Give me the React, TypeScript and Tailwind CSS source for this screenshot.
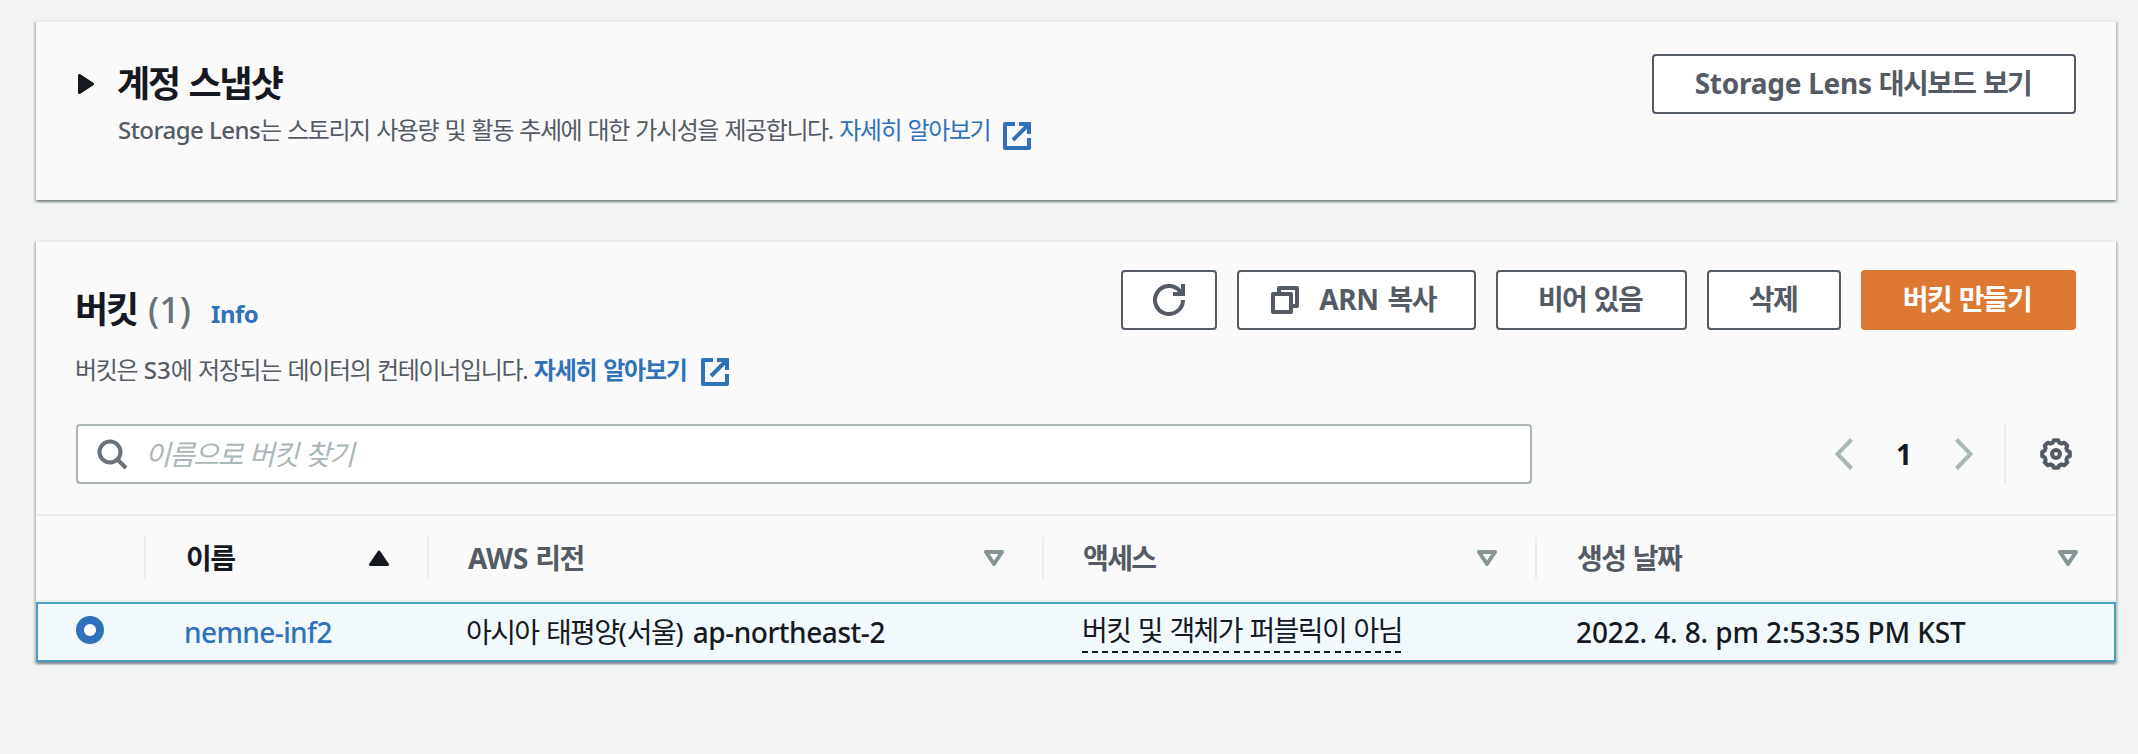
import type { ReactNode } from "react";

const panel =
  "border-t-2 border-[#eaeded] bg-[#fafafa] shadow-[0_2px_2px_rgba(0,28,36,0.3),2px_2px_2px_rgba(0,28,36,0.15),-2px_2px_2px_rgba(0,28,36,0.15)]";

// Korean text is set a little tighter than the font's default, with wider word gaps.
const ko24 = "tracking-[-1.4px] [word-spacing:1.5px]";
const ko28 = "tracking-[-1.6px] [word-spacing:1.8px]";
const ko36 = "tracking-[-2.1px] [word-spacing:2.3px]";

function ExternalIcon() {
  return (
    <svg className="h-7 w-7 shrink-0" viewBox="0 0 28 28" fill="none" stroke="#2f72b9" strokeWidth="4">
      <path d="M12 2H2V26H26V16" strokeLinejoin="round" />
      <path d="M16 2H26V12" />
      <path d="M10 18L25 3" />
    </svg>
  );
}

function RefreshIcon() {
  return (
    <svg className="h-8 w-8" viewBox="0 0 32 32" fill="none" stroke="#545b64" strokeWidth="4">
      <path d="M30 16A14 14 0 1 1 27 7.3L29 10" />
      <path d="M30 0V10H20" />
    </svg>
  );
}

function CopyIcon() {
  return (
    <svg className="h-7 w-7" viewBox="0 0 28 28" fill="none" stroke="#545b64" strokeWidth="4" strokeLinejoin="round">
      <rect x="2" y="8" width="18" height="18" />
      <path d="M8 7V2H26V20H21" />
    </svg>
  );
}

function SearchIcon() {
  return (
    <svg className="h-8 w-8 shrink-0" viewBox="0 0 32 32" fill="none" stroke="#687078" strokeWidth="4">
      <circle cx="14" cy="14" r="10.5" />
      <path d="M21.5 21.5L30 30" />
    </svg>
  );
}

const gearPoints = Array.from({ length: 8 }, (_, k) =>
  [
    [-9, 14],
    [9, 14],
    [16, 11.8],
    [29, 11.8],
  ].map(([offset, radius]) => {
    const a = ((k * 45 + offset) * Math.PI) / 180;
    return `${(16 + radius * Math.cos(a)).toFixed(2)},${(16 + radius * Math.sin(a)).toFixed(2)}`;
  }),
)
  .flat()
  .join(" ");

function GearIcon() {
  return (
    <svg className="h-8 w-8" viewBox="0 0 32 32" fill="none" stroke="#545b64" strokeWidth="4">
      <polygon points={gearPoints} strokeLinejoin="round" />
      <circle cx="16" cy="16" r="4" />
    </svg>
  );
}

function Chevron({ right = false }: { right?: boolean }) {
  return (
    <svg className="h-8 w-[18px]" viewBox="0 0 18 32" fill="none" stroke="#aab7b8" strokeWidth="4">
      <path d={right ? "M1.5 1.5L15.5 16L1.5 30.5" : "M16.5 1.5L2.5 16L16.5 30.5"} />
    </svg>
  );
}

function SortDown() {
  return (
    <svg className="h-4 w-5" viewBox="0 0 20 16" fill="none" stroke="#879596" strokeWidth="4" strokeLinejoin="round">
      <path d="M2 2H18L10 14Z" />
    </svg>
  );
}

function SortUp() {
  return (
    <svg className="h-4 w-5" viewBox="0 0 20 16" fill="#16191f" stroke="#16191f" strokeWidth="3" strokeLinejoin="round">
      <path d="M1.5 14.5H18.5L10 2Z" />
    </svg>
  );
}

function Button({ children, className }: { children: ReactNode; className: string }) {
  return (
    <button
      className={
        "flex h-[60px] items-center justify-center rounded-[4px] border-2 pb-[3px] text-[28px] font-bold leading-[44px] " +
        ko28 +
        " " +
        className
      }
    >
      {children}
    </button>
  );
}

const plain = "border-[#545b64] bg-white text-[#545b64]";

function HeaderCell({ children, icon, last = false }: { children: ReactNode; icon: ReactNode; last?: boolean }) {
  return (
    <div
      className={
        "flex h-[42px] items-center justify-between border-[#eaeded] pl-[39px] pr-[38px] " + (last ? "" : "border-r-2")
      }
    >
      <span className="pb-px leading-[44px]">{children}</span>
      {icon}
    </div>
  );
}

const columns = "grid grid-cols-[110px_283px_615px_493px_579px]";

export default function App() {
  return (
    <div className='h-[754px] w-[2138px] overflow-hidden whitespace-nowrap bg-[#f2f3f3] pl-9 pr-[22px] pt-5 font-["Noto_Sans","Noto_Sans_CJK_KR",sans-serif] text-[28px] text-[#16191f]'>
      <section className={"flex h-[180px] items-start justify-between px-10 pt-8 " + panel}>
        <div className="flex pt-2">
          <svg className="ml-0.5 mt-3 h-5 w-4" viewBox="0 0 16 20" fill="#16191f" stroke="#16191f" strokeWidth="3" strokeLinejoin="round">
            <path d="M1.5 1.5V18.5L14.5 10Z" />
          </svg>
          <div className="pl-[23px]">
            <h2 className={"text-[36px] font-bold leading-[44px] " + ko36}>계정 스냅샷</h2>
            <div className="ml-px mt-0.5 flex items-center text-[24px] leading-[44px] text-[#545b64]">
              <p className={ko24}>
                <span className="font-medium tracking-[-0.55px] [word-spacing:0px]">Storage Lens</span>는 스토리지 사용량 및 활동 추세에 대한
                가시성을 제공합니다. <a className="text-[#2f72b9]">자세히 알아보기</a>
              </p>
              <span className="ml-[13px] mt-3">
                <ExternalIcon />
              </span>
            </div>
          </div>
        </div>
        <Button className={plain + " w-[424px] pr-0.5"}>
          <span className="tracking-[-0.25px] [word-spacing:0px]">Storage Lens&nbsp;</span>대시보드 보기
        </Button>
      </section>

      <section className={"mt-10 h-[422px] " + panel}>
        <div className="flex h-[182px] items-start justify-between px-10 pt-7">
          <div className="pt-[18px]">
            <div className="-ml-px flex items-baseline leading-[44px]">
              <h2 className={"text-[36px] font-bold " + ko36}>버킷</h2>
              <span className="ml-[11px] text-[36px] font-medium text-[#687078]">(1)</span>
              <a className="ml-5 text-[24px] font-bold tracking-[-0.5px] text-[#2f72b9]">Info</a>
            </div>
            <div className="-ml-px mt-3 flex items-center text-[24px] leading-[44px] text-[#545b64]">
              <p className="tracking-[-1.33px] [word-spacing:1.6px]">
                버킷은 <span className="font-medium tracking-normal">S3</span>에 저장되는 데이터의 컨테이너입니다.{" "}
                <a className="font-bold tracking-[-1.2px] text-[#2f72b9]">자세히 알아보기</a>
              </p>
              <span className="ml-3.5 mt-1">
                <ExternalIcon />
              </span>
            </div>
          </div>
          <div className="flex">
            <Button className={plain + " w-24"}>
              <span className="pt-[3px]">
                <RefreshIcon />
              </span>
            </Button>
            <Button className={plain + " ml-5 w-[239px] pr-1.5"}>
              <span className="mr-5 pt-[3px]">
                <CopyIcon />
              </span>
              <span>
                <span className="tracking-[-0.3px]">ARN </span>복사
              </span>
            </Button>
            <Button className={plain + " ml-5 w-[191px] pr-[3px]"}>비어 있음</Button>
            <Button className={plain + " ml-5 w-[134px] pr-0.5"}>삭제</Button>
            <Button className="ml-5 w-[215px] border-[#dd7832] bg-[#dd7832] pr-[3px] text-white">버킷 만들기</Button>
          </div>
        </div>

        <div className="flex h-[90px] items-start justify-between px-10">
          <label className="flex h-[60px] w-[1456px] items-center rounded-[4px] border-2 border-[#aab7b8] bg-white pl-[18px]">
            <SearchIcon />
            <input
              placeholder="이름으로 버킷 찾기"
              className={
                "ml-[17px] h-[44px] flex-1 bg-transparent outline-none placeholder:italic placeholder:text-[#aab7b8] " + ko28
              }
            />
          </label>
          <div className="flex h-[60px] items-center">
            <Chevron />
            <span className="w-[102px] text-center font-bold">1</span>
            <Chevron right />
            <span className="ml-[31px] h-[60px] w-0.5 bg-[#eaeded]" />
            <span className="ml-[34px] mr-1">
              <GearIcon />
            </span>
          </div>
        </div>

        <div className={"h-[88px] items-center border-y-2 border-[#eaeded] font-bold text-[#545b64] " + ko28 + " " + columns}>
          <div className="h-[42px] border-r-2 border-[#eaeded]" />
          <HeaderCell icon={<SortUp />}>
            <span className="pl-px text-[#16191f]">이름</span>
          </HeaderCell>
          <HeaderCell icon={<SortDown />}>
            <span className="tracking-[-0.2px] [word-spacing:0px]">AWS </span>리전
          </HeaderCell>
          <HeaderCell icon={<SortDown />}>액세스</HeaderCell>
          <HeaderCell icon={<SortDown />} last>
            <span className="pl-px">생성 날짜</span>
          </HeaderCell>
        </div>

        <div className="h-[60px] bg-[#f2f9fd] outline-2 -outline-offset-2 outline-[#479fc6]">
          <div className={"h-full items-center font-medium leading-[44px] " + columns}>
            <div className="pl-10">
              <span className="mb-1 flex h-7 w-7 items-center justify-center rounded-full bg-[#2f72b9]">
                <span className="h-3 w-3 rounded-full bg-white" />
              </span>
            </div>
            <a className="mb-px pl-[38px] tracking-[-0.6px] text-[#2f72b9]">nemne-inf2</a>
            <div className="mb-px pl-[37px] tracking-[-0.45px]">
              <span className={"font-normal " + ko28}>
                아시아 태평양<span className="tracking-normal">(</span>서울<span className="tracking-normal">) </span>
              </span>
              ap-northeast-2
            </div>
            <div className="pl-[38px]">
              <span className={"flex w-[320px] flex-col font-normal " + ko28}>
                <span className="h-[42px] leading-[42px]">버킷 및 객체가 퍼블릭이 아님</span>
                <span className="mb-[3px] h-0.5 bg-[repeating-linear-gradient(90deg,#16191f_0_6px,transparent_6px_10.1px)]" />
              </span>
            </div>
            <div className="mb-px pl-[39px] tracking-[-0.13px]">2022. 4. 8. pm 2:53:35 PM KST</div>
          </div>
        </div>
      </section>
    </div>
  );
}
